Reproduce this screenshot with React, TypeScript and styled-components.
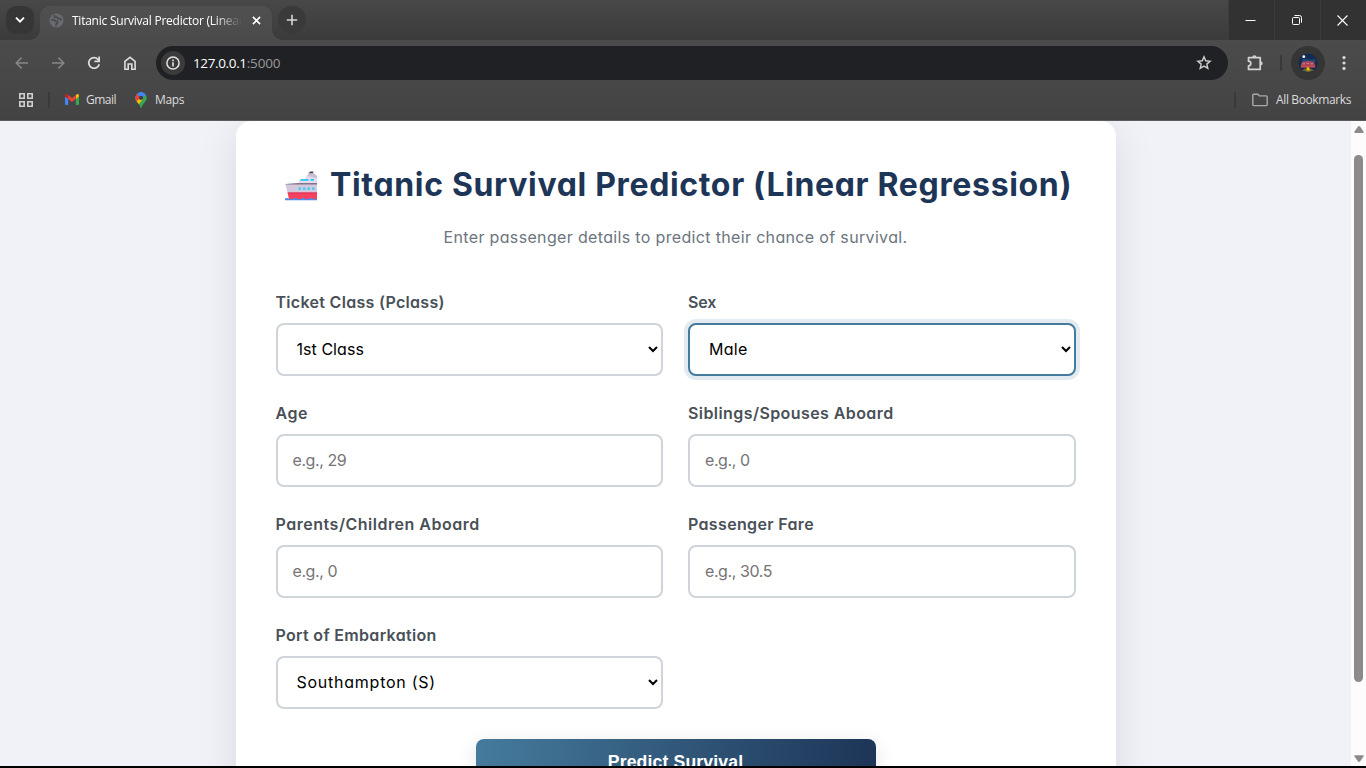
import React from "react";
import styled, { createGlobalStyle, css } from "styled-components";

const GlobalStyle = createGlobalStyle`
  *, *::before, *::after { box-sizing: border-box; }
  html, body { margin: 0; padding: 0; height: 768px; overflow: hidden; background: #000; }
  svg { display: block; flex: none; }
`;

const Window = styled.div`
  display: flex;
  flex-direction: column;
  width: 1366px;
  height: 768px;
  overflow: hidden;
  background: #000;
  font-family: "Open Sans", "Noto Sans", sans-serif;
`;

/* ---------- browser frame ---------- */

const TabStrip = styled.header`
  display: flex;
  flex: none;
  height: 40px;
  background: linear-gradient(#484848, #3b3b3b);
`;

const TabSearch = styled.div`
  display: flex;
  align-items: center;
  justify-content: center;
  width: 28px;
  height: 28px;
  margin: 6px 6px 0;
  border-radius: 10px;
  background: #363636;
`;

const Tab = styled.div`
  position: relative;
  display: flex;
  align-items: center;
  width: 232px;
  height: 34px;
  margin-top: 6px;
  padding: 0 10px 5px 9px;
  border-radius: 10px 10px 0 0;
  background: linear-gradient(#505050, #4b4b4b);

  &::before,
  &::after {
    content: "";
    position: absolute;
    bottom: 0;
    width: 10px;
    height: 10px;
  }
  &::before {
    left: -10px;
    background: radial-gradient(circle at 0 0, transparent 9.5px, #4b4b4b 10px);
  }
  &::after {
    right: -10px;
    background: radial-gradient(circle at 100% 0, transparent 9.5px, #4b4b4b 10px);
  }
`;

const TabTitle = styled.span`
  width: 169px;
  margin: 1px 10.5px 0 8px;
  overflow: hidden;
  white-space: nowrap;
  font-size: 12px;
  line-height: 18px;
  letter-spacing: -0.24px;
  color: #fff;
  mask-image: linear-gradient(90deg, #000 142px, transparent 170px);
`;

const NewTab = styled.div`
  display: flex;
  align-items: center;
  justify-content: center;
  width: 28px;
  height: 28px;
  margin: 6px auto 0 6px;
  border-radius: 50%;
  background: #3a3a3a;
`;

const WindowButton = styled.div`
  display: flex;
  align-items: center;
  justify-content: center;
  width: 46px;
  height: 40px;
  padding-right: 2px;
  background: #323232;
  border-left: 1px solid #3c3c3c;
`;

const Toolbar = styled.div`
  display: flex;
  flex: none;
  align-items: center;
  height: 46px;
  padding: 0 14px;
  background: linear-gradient(#4b4b4b, #474747);
`;

const NavIcons = styled.div`
  display: flex;
  gap: 20px;
  width: 142px;
`;

const AddressBar = styled.div`
  display: flex;
  align-items: center;
  width: 1072px;
  height: 34px;
  padding: 0 16px 0 5px;
  border-radius: 17px;
  background: #202124;
`;

const InfoBadge = styled.div`
  display: flex;
  align-items: center;
  justify-content: center;
  width: 24px;
  height: 24px;
  margin-right: 8px;
  border-radius: 50%;
  background: #3b3b3c;
`;

const Url = styled.span`
  flex: 1;
  font-size: 13.5px;
  line-height: 20px;
  letter-spacing: -0.36px;
  color: #fff;
`;

const Port = styled.span`
  letter-spacing: -0.15px;
  color: #9a9a9d;
`;

const Extensions = styled.div`
  margin-left: 18px;
`;

const Divider = styled.div<{ $left: number; $right: number }>`
  flex: none;
  width: 2px;
  height: 16px;
  margin: 0 ${(p) => p.$right}px 0 ${(p) => p.$left}px;
  border-radius: 1px;
  background: #393939;
`;

const Profile = styled.div`
  display: flex;
  align-items: center;
  justify-content: center;
  width: 34px;
  height: 34px;
  margin-right: 17px;
  border-radius: 50%;
  background: #353535;
`;

const BookmarksBar = styled.nav`
  display: flex;
  flex: none;
  align-items: center;
  height: 35px;
  padding: 0 15px 7px 18px;
  background: linear-gradient(#474747, #434343);
  border-bottom: 1px solid #5c5b5e;
`;

const Bookmark = styled.div<{ $gap: number; $right?: number; $spacing?: number }>`
  display: flex;
  align-items: center;
  gap: ${(p) => p.$gap}px;
  margin-right: ${(p) => p.$right ?? 0}px;
  font-size: 12px;
  line-height: 18px;
  letter-spacing: ${(p) => p.$spacing ?? -0.4}px;
  color: #dcdcdc;
  white-space: nowrap;
`;

const Spacer = styled.div`
  flex: 1;
`;

/* ---------- web page ---------- */

const Viewport = styled.div`
  display: flex;
  flex: none;
  height: 645px;
  overflow: hidden;
`;

const Page = styled.main`
  flex: 1;
  height: 645px;
  overflow: hidden;
  background: #f0f2f7;
  font-family: Inter, sans-serif;
  font-feature-settings: "cv11";
`;

const Card = styled.section`
  width: 880px;
  height: 760px;
  margin: 0 auto;
  padding: 40px;
  border-radius: 15px;
  background: #fff;
  box-shadow: 0 10px 40px rgba(0, 0, 0, 0.1);
`;

const Heading = styled.h1`
  display: flex;
  align-items: center;
  height: 48px;
  margin: 0 0 15px 9px;
  font-size: 32px;
  font-weight: 700;
  line-height: 48px;
  letter-spacing: 0.66px;
  white-space: nowrap;
  color: #1d3557;

  svg { margin: 2px 12.5px 0 0; }
`;

const Intro = styled.p`
  margin: 0 0 40px;
  font-size: 16px;
  line-height: 26px;
  letter-spacing: 0.34px;
  text-align: center;
  color: #6c757d;
`;

const Form = styled.form`
  display: grid;
  grid-template-columns: 1fr 1fr;
  gap: 25px;
`;

const Field = styled.div`
  display: flex;
  flex-direction: column;
  height: 86px;
`;

const Label = styled.label<{ $spacing: number }>`
  height: 25px;
  margin-bottom: 8px;
  font-size: 16px;
  font-weight: 600;
  line-height: 25px;
  letter-spacing: ${(p) => p.$spacing}px;
  color: #495057;
`;

const control = css`
  width: 100%;
  height: 53px;
  border: 2px solid #ced4da;
  border-radius: 8px;
  background: #fff;
  font-family: inherit;
  font-feature-settings: inherit;
  font-size: 16px;
  outline: none;
`;

const Input = styled.input`
  ${control}
  padding: 11px 15px 13px;
  letter-spacing: -0.42px;
  &::placeholder { color: #757575; }
`;

const Select = styled.select<{ $active?: boolean; $spacing: number }>`
  ${control}
  padding: 11px 0 13px 15px;
  letter-spacing: ${(p) => p.$spacing}px;
  color: #000;
  ${(p) =>
    p.$active &&
    css`
      border-color: #457b9d;
      box-shadow: 0 0 0 4px rgba(69, 123, 157, 0.15);
    `}
`;

const Submit = styled.button`
  grid-column: 1 / -1;
  justify-self: center;
  width: 400px;
  height: 48px;
  margin-top: 5px;
  padding: 0 0 1px;
  border: 0;
  border-radius: 8px;
  background: linear-gradient(90deg, #457b9d, #1d3557);
  box-shadow: 0 4px 20px rgba(0, 0, 0, 0.1);
  font-family: "Liberation Sans", Arial, sans-serif;
  font-size: 17.6px;
  font-weight: 700;
  letter-spacing: 0.15px;
  color: #fff;
`;

const Scrollbar = styled.div`
  display: flex;
  flex-direction: column;
  align-items: center;
  width: 15px;
  height: 645px;
  padding: 4px 0 3px;
  background: #fcfcfc;
`;

const Thumb = styled.div`
  width: 9px;
  height: 527px;
  margin: 22px 0 auto;
  border-radius: 5px;
  background: #8b8b8b;
`;

/* ---------- drawings ---------- */

const Chevron = () => (
  <svg width="10" height="8" viewBox="0 0 10 8" fill="none" stroke="#fff" strokeWidth="1.9">
    <path d="M1 1.6 5 5.6 9 1.6" />
  </svg>
);

const Globe = () => (
  <svg width="15" height="15" viewBox="0 0 15 15">
    <circle cx="7.5" cy="7.5" r="7" fill="#686b70" />
    <path d="M2 6.8h3.2l1.4 1.5h1.8v1.8L7 11.4v2M5.4 2v2.1h2.3l1.2 1.6h2.2l1.6 1.8" fill="none" stroke="#494a4d" strokeWidth="1.7" />
  </svg>
);

const CloseTab = () => (
  <svg width="9" height="9" viewBox="0 0 9 9" stroke="#fff" strokeWidth="1.6">
    <path d="M.9.9 8.1 8.1M8.1.9.9 8.1" />
  </svg>
);

const Plus = () => (
  <svg width="12" height="12" viewBox="0 0 12 12" stroke="#d6d6d6" strokeWidth="1.6">
    <path d="M6 .8v10.4M.8 6h10.4" />
  </svg>
);

const Arrow = ({ flip = false }: { flip?: boolean }) => (
  <svg width="16" height="16" viewBox="0 0 16 16" fill="none" stroke="#868686" strokeWidth="1.5">
    <path d={flip ? "M2 8h11.4M8.4 2.6 13.8 8l-5.4 5.4" : "M14 8H2.6M7.6 2.6 2.2 8l5.4 5.4"} />
  </svg>
);

const Reload = () => (
  <svg width="16" height="16" viewBox="0 0 16 16">
    <path d="M13.2 9.2A5.3 5.3 0 1 1 11.9 4.3L13 5.5" fill="none" stroke="#dedede" strokeWidth="1.7" />
    <path d="M14 1.6v5.6H8.4V5.6h3.9V1.6z" fill="#dedede" />
  </svg>
);

const Home = () => (
  <svg width="16" height="16" viewBox="0 0 16 16" fill="none" stroke="#dedede" strokeWidth="1.6">
    <path d="M2.9 14.2V6.3L8 2.3l5.1 4v7.9H9.8V9H6.2v5.2z" />
  </svg>
);

const Info = () => (
  <svg width="14" height="14" viewBox="0 0 14 14">
    <circle cx="7" cy="7" r="6.1" fill="none" stroke="#e4e4e4" strokeWidth="1.5" />
    <path d="M6.2 6.2h1.6v4.2H6.2zM6.2 3.6h1.6v1.6H6.2z" fill="#e4e4e4" />
  </svg>
);

const Star = () => (
  <svg width="16" height="16" viewBox="0 0 16 16" fill="none" stroke="#cfcfcf" strokeWidth="1.4">
    <path d="m8 1.8 1.7 4 4.4.4-3.3 2.9 1 4.3L8 11.1l-3.8 2.3 1-4.3-3.3-2.9 4.4-.4z" />
  </svg>
);

const Puzzle = () => (
  <svg width="18" height="18" viewBox="0 0 18 18">
    <path
      d="M2.5 3.7h11.7v11.7H2.5v-3.6a2.3 2.3 0 0 0 0-4.6z"
      fill="none"
      stroke="#d2d2d2"
      strokeWidth="1.7"
      strokeLinejoin="round"
    />
    <path d="M6.3 3.4a2.1 2.1 0 0 1 4.2 0zM14.5 7.3a2.1 2.1 0 0 1 0 4.2z" fill="#d2d2d2" />
  </svg>
);

const Avatar = () => (
  <svg width="20" height="20" viewBox="0 0 20 20">
    <circle cx="10" cy="10" r="9.6" fill="#112b52" />
    <path d="M3 7.5Q6 4.5 10 6t7-.5l1 3.5-9 2z" fill="#1d4475" />
    <path d="M4 8.800Q10 7 16 8.800l1.200 3.600-14.400.2z" fill="#a64556" />
    <path d="M2.8 12.2h14.4v2.400H2.8z" fill="#c84b50" />
    <path d="M4.5 10.8h2.5m1.500-.4h2.500m1.500.4h2.500" stroke="#c98196" />
    <path d="M4 17.400 7 15.500h6l3 1.900-6 1.800z" fill="#6b6630" />
    <path d="M8.6 14.2h2.4l1 3.3H8.6z" fill="#f2b705" />
    <circle cx="5.8" cy="3.7" r="1.4" fill="#fff" />
  </svg>
);

const Dots = () => (
  <svg width="4" height="16" viewBox="0 0 4 16" fill="#dadada">
    <circle cx="2" cy="2.6" r="1.6" />
    <circle cx="2" cy="8" r="1.6" />
    <circle cx="2" cy="13.4" r="1.6" />
  </svg>
);

const Apps = () => (
  <svg width="16" height="16" viewBox="0 0 16 16" fill="none" stroke="#d0d0d0" strokeWidth="1.6">
    <path d="M1.8 1.8h4.4v4.4H1.8zM9.8 1.8h4.4v4.4H9.8zM1.8 9.8h4.4v4.4H1.8zM9.8 9.8h4.4v4.4H9.8z" />
  </svg>
);

const GmailLogo = () => (
  <svg width="14" height="11" viewBox="0 0 14 11">
    <path d="M0 2.2 3.2 4.6V11H1a1 1 0 0 1-1-1z" fill="#4285f4" />
    <path d="M14 2.2 10.8 4.6V11H13a1 1 0 0 0 1-1z" fill="#34a853" />
    <path d="M10.8 1 12 .2C12.9-.3 14 .4 14 1.4v1.2l-3.2 2.5z" fill="#fbbc04" />
    <path d="M3.2 1 2 .2C1.1-.3 0 .4 0 1.4v1.2l3.2 2.5z" fill="#c5221f" />
    <path d="M3.2 1 7 3.9 10.8 1v4.1L7 8 3.2 5.1z" fill="#ea4335" />
  </svg>
);

const MapsLogo = () => (
  <svg width="12" height="16" viewBox="0 0 12 16">
    <defs>
      <clipPath id="pin">
        <path d="M6 .3a5.6 5.6 0 0 1 5.6 5.6c0 4-3.8 5.1-4.9 9.3-.2.7-1.2.7-1.4 0C4.5 11 .4 9.9.4 5.9A5.6 5.6 0 0 1 6 .3z" />
      </clipPath>
    </defs>
    <g clipPath="url(#pin)">
      <path d="M0 0h12v16H0z" fill="#34a853" />
      <path d="M0 10.5 12 0H0z" fill="#4285f4" />
      <path d="M0 0 6 5.4 0 11z" fill="#ea4335" />
      <path d="M0 11 6 5 7.8 7.5 2 14z" fill="#fbbc04" />
      <path d="M2 0h10v3L6 6 2.2 1.8z" fill="#4285f4" />
    </g>
    <circle cx="6" cy="5.9" r="2.1" fill="#3b3f46" />
  </svg>
);

const Folder = () => (
  <svg width="16" height="14" viewBox="0 0 16 14" fill="none" stroke="#a9a9a9" strokeWidth="1.4">
    <path d="M.8 2.2q0-1 1-1h4.1l1.5 1.7h6.8q1 0 1 1v7.7q0 1-1 1H1.8q-1 0-1-1z" />
  </svg>
);

const Minimize = () => (
  <svg width="11" height="11" viewBox="0 0 11 11" fill="#fff">
    <path d="M.5 5h10v1H.5z" />
  </svg>
);

const Restore = () => (
  <svg width="10" height="10" viewBox="0 0 10 10" fill="none" stroke="#fff">
    <rect x=".5" y="2.5" width="7" height="7" rx="1" />
    <path d="M2.5.5H7.5Q9.5.5 9.5 2.5V7.6" />
  </svg>
);

const CloseWindow = () => (
  <svg width="11" height="11" viewBox="0 0 11 11" stroke="#fff" strokeWidth="1.1">
    <path d="M.5.5l10 10M10.5.5l-10 10" />
  </svg>
);

const Ship = () => (
  <svg width="33" height="30" viewBox="0 0 33 30">
    <path d="M23 3.500 25 .5H28.500l-1.200 4z" fill="#4d4153" />
    <path d="M21 5.5 24 2.300 32 5V14H14V10l2-2h4z" fill="#e3dced" />
    <path d="M24.500 2.300h4.500L32 5v2.500L22.500 5z" fill="#c9bfd4" />
    <path d="M16 8h7.500v1.800H15zM25.500 8h3.500v1.800h-3.500z" fill="#26c9fa" />
    <path d="M.5 13.5 14 12.300H32V23H3z" fill="#d3c8dc" />
    <path d="M.5 13 13 12h19v1.400H.7z" fill="#82748c" />
    <path d="M13.500 16.500H16v2.200h-2.500zM18 16.500h2.500v2.200H18zM22.500 16.500H25v2.200h-2.500zM27 16.500h2.500v2.200H27z" fill="#37cdf7" />
    <path d="M2.600 21.500H32V29H4z" fill="#f4425f" />
    <path d="M2.600 21.500H32v1H3z" fill="#d9355d" />
    <path d="M0 29.200v-1.500q2-1.200 4 0t4 0 4 0 4 0 4 0 4 0 4 0 4 0v1.500z" fill="#4a8ff0" />
  </svg>
);

const ScrollArrow = ({ down = false }: { down?: boolean }) => (
  <svg width="10" height="8" viewBox="0 0 10 8" fill="#8b8b8b">
    <path d={down ? "M.5.2H9.5V1.5L6 6.5Q5 7.3 4 6.5L.5 1.5z" : "M.5 8H9.5V6.5L6 1.5Q5 .7 4 1.5L.5 6.5z"} />
  </svg>
);

/* ---------- screens ---------- */

const BrowserFrame = () => (
  <>
    <TabStrip>
      <TabSearch><Chevron /></TabSearch>
      <Tab>
        <Globe />
        <TabTitle>Titanic Survival Predictor (Linear Regression)</TabTitle>
        <CloseTab />
      </Tab>
      <NewTab><Plus /></NewTab>
      <WindowButton><Minimize /></WindowButton>
      <WindowButton><Restore /></WindowButton>
      <WindowButton><CloseWindow /></WindowButton>
    </TabStrip>
    <Toolbar>
      <NavIcons>
        <Arrow />
        <Arrow flip />
        <Reload />
        <Home />
      </NavIcons>
      <AddressBar>
        <InfoBadge><Info /></InfoBadge>
        <Url>127.0.0.1<Port>:5000</Port></Url>
        <Star />
      </AddressBar>
      <Extensions><Puzzle /></Extensions>
      <Divider $left={16} $right={9} />
      <Profile><Avatar /></Profile>
      <Dots />
    </Toolbar>
    <BookmarksBar>
      <Apps />
      <Divider $left={14} $right={15} />
      <Bookmark $gap={7} $right={19} $spacing={-0.5}><GmailLogo />Gmail</Bookmark>
      <Bookmark $gap={8}><MapsLogo />Maps</Bookmark>
      <Spacer />
      <Divider $left={0} $right={16} />
      <Bookmark $gap={8} $spacing={-0.39}><Folder />All Bookmarks</Bookmark>
    </BookmarksBar>
  </>
);

const Predictor = () => (
  <Card>
    <Heading><Ship />Titanic Survival Predictor (Linear Regression)</Heading>
    <Intro>Enter passenger details to predict their chance of survival.</Intro>
    <Form>
      <Field>
        <Label $spacing={0.3}>Ticket Class (Pclass)</Label>
        <Select $spacing={0.05}><option>1st Class</option></Select>
      </Field>
      <Field>
        <Label $spacing={-0.15}>Sex</Label>
        <Select $active $spacing={0.3}><option>Male</option></Select>
      </Field>
      <Field>
        <Label $spacing={0.6}>Age</Label>
        <Input placeholder="e.g., 29" />
      </Field>
      <Field>
        <Label $spacing={0.42}>Siblings/Spouses Aboard</Label>
        <Input placeholder="e.g., 0" />
      </Field>
      <Field>
        <Label $spacing={0.52}>Parents/Children Aboard</Label>
        <Input placeholder="e.g., 0" />
      </Field>
      <Field>
        <Label $spacing={0.34}>Passenger Fare</Label>
        <Input placeholder="e.g., 30.5" />
      </Field>
      <Field>
        <Label $spacing={0.32}>Port of Embarkation</Label>
        <Select $spacing={0.75}><option>Southampton (S)</option></Select>
      </Field>
      <Submit type="button">Predict Survival</Submit>
    </Form>
  </Card>
);

export default function App() {
  return (
    <Window>
      <GlobalStyle />
      <BrowserFrame />
      <Viewport>
        <Page><Predictor /></Page>
        <Scrollbar>
          <ScrollArrow />
          <Thumb />
          <ScrollArrow down />
        </Scrollbar>
      </Viewport>
    </Window>
  );
}
